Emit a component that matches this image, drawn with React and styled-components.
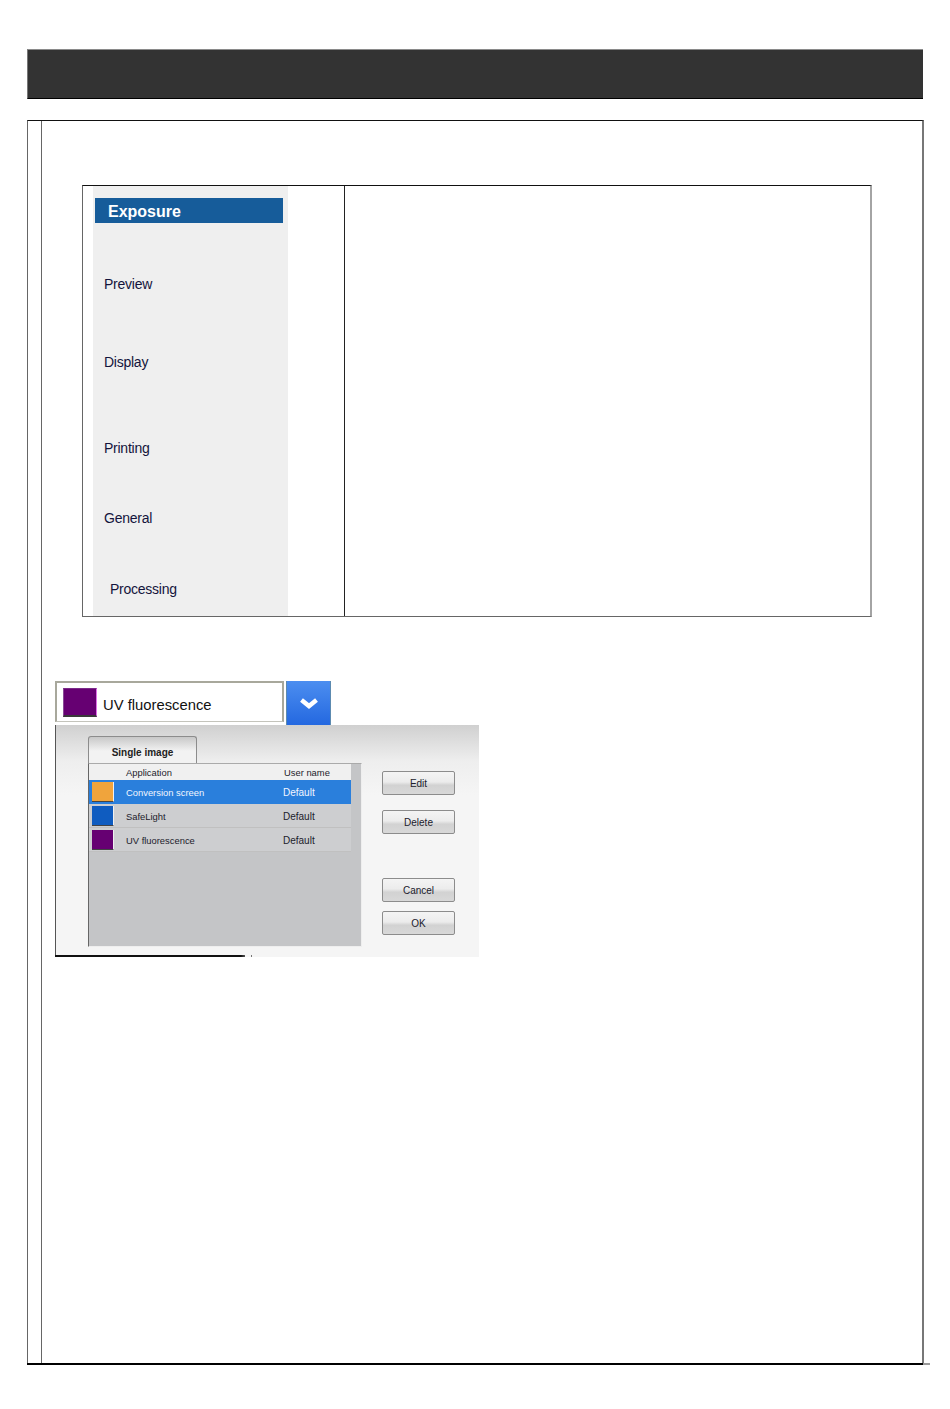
import React from "react";
import styled, { createGlobalStyle } from "styled-components";

const Global = createGlobalStyle`
  html, body { margin: 0; padding: 0; background: #fff; }
  body { font-family: "Liberation Sans", Arial, sans-serif; }
`;

const Page = styled.div`
  width: 950px;
  height: 1409px;
  padding: 49px 0 0 27px;
  box-sizing: border-box;
  overflow: hidden;
`;
const TitleBar = styled.div`
  width: 896px;
  height: 50px;
  box-sizing: border-box;
  background: #333333;
  border-top: 1px solid #8a8a8a;
  border-left: 1px solid #777;
  border-bottom: 1px solid #000;
`;
const Frame = styled.div`
  margin-top: 21px;
  width: 897px;
  height: 1243px;
  box-sizing: border-box;
  display: flex;
  border-top: 1px solid #111;
  border-left: 1px solid #666;
  border-right: 2px solid #777;
`;
const Gutter = styled.div`
  width: 13px;
  flex: none;
  border-right: 1px solid #666;
`;
const Content = styled.div`
  flex: 1;
  padding: 64px 0 0 13px;
`;
const Rule = styled.div`
  width: 903px;
  height: 2px;
  background: linear-gradient(to right, #000 896px, #999 896px);
`;
const InfoTable = styled.div`
  width: 790px;
  height: 432px;
  margin-left: 27px;
  box-sizing: border-box;
  display: flex;
  border-top: 1px solid #111;
  border-left: 1px solid #666;
  border-right: 2px solid #a4a4a4;
  border-bottom: 1px solid #666;
`;
const MenuCell = styled.div`
  width: 262px;
  flex: none;
  box-sizing: border-box;
  padding-left: 10px;
  border-right: 1px solid #222;
`;
const Menu = styled.div`
  width: 195px;
  height: 100%;
  background: #efefef;
  display: flex;
  flex-direction: column;
  padding-top: 12px;
  box-sizing: border-box;
`;
const ActiveItem = styled.div`
  width: 188px;
  height: 25px;
  margin-left: 2px;
  box-sizing: border-box;
  padding-left: 13px;
  background: #165c9a;
  color: #fff;
  font-weight: 700;
  font-size: 16px;
  line-height: 27px;
`;
const MenuItem = styled.div`
  height: 16px;
  line-height: 16px;
  font-size: 14px;
  letter-spacing: -0.25px;
  color: #14143c;
  margin-top: ${(p) => p.$top}px;
  margin-left: ${(p) => p.$left}px;
`;
const Picker = styled.div`
  margin-top: 64px;
  display: flex;
  align-items: flex-start;
  gap: 2px;
`;
const PickerField = styled.div`
  width: 229px;
  height: 41px;
  box-sizing: border-box;
  display: flex;
  align-items: center;
  gap: 6px;
  padding-left: 6px;
  border: 2px solid #a8a89c;
  border-bottom-width: 1px;
  border-bottom-color: #c4c4bc;
  font-size: 14.8px;
  color: #111;
`;
const PickerLabel = styled.span`
  padding-top: 5px;
  line-height: 18px;
`;
const PickerSwatch = styled.div`
  width: 34px;
  height: 29px;
  box-sizing: border-box;
  background: #660072;
  border-top: 1px solid #7a2a88;
  border-left: 1px solid #8a4a96;
  border-right: 1px solid #e070e8;
  border-bottom: 2px solid #3a3a3a;
`;
const PickerButton = styled.div`
  width: 45px;
  height: 44px;
  box-sizing: border-box;
  display: flex;
  align-items: center;
  justify-content: center;
  background: linear-gradient(#4c8ef0, #2468e0);
  border-right: 1px solid #5c8ab0;
  border-left: 1px solid #5c8ab0;
`;
const Dialog = styled.div`
  width: 424px;
  height: 232px;
  box-sizing: border-box;
  display: flex;
  padding: 11px 0 0 32px;
  gap: 20px;
  background: linear-gradient(#d0d0d0 0, #eeeeee 36px, #f5f5f5 70px);
  border-left: 1px solid #555;
`;
const ListColumn = styled.div`
  display: flex;
  flex-direction: column;
`;
const Tab = styled.div`
  width: 109px;
  height: 27px;
  box-sizing: border-box;
  padding-top: 9px;
  text-align: center;
  font-size: 10px;
  font-weight: 700;
  line-height: 13px;
  color: #222;
  border: 1px solid #8c8c8c;
  border-bottom: none;
  border-radius: 3px 3px 0 0;
  background: linear-gradient(#c8c8c8, #f2f2f2 14px);
`;
const ListPanel = styled.div`
  width: 274px;
  height: 184px;
  box-sizing: border-box;
  background: #c4c5c7;
  border-top: 1px solid #aaa;
  border-left: 1px solid #666;
  border-right: 1px solid #eee;
  border-bottom: 1px solid #eee;
`;
const Row = styled.div`
  width: 262px;
  display: flex;
  align-items: center;
  box-sizing: border-box;
  height: ${(p) => (p.$head ? 16 : 24)}px;
  background: ${(p) => (p.$head ? "#f0f0f0" : p.$selected ? "#2a7fdc" : "#cdced0")};
  color: ${(p) => (p.$selected ? "#f2f6ff" : "#1c1c2c")};
  border-bottom: ${(p) => (p.$head || p.$selected ? "none" : "1px solid #c0c0c0")};
  font-size: 9.4px;
`;
const RowSwatch = styled.div`
  width: 22px;
  height: 20px;
  margin-left: 3px;
  flex: none;
  box-sizing: border-box;
  background: ${(p) => p.$color};
  border-right: 1px solid #f0f0f0;
  border-bottom: 1px solid #444;
`;
const SwatchSpace = styled.div`
  width: 25px;
  flex: none;
`;
const NameCell = styled.div`
  width: 158px;
  margin-left: 12px;
  flex: none;
  padding-top: ${(p) => (p.$plain ? 1 : 0)}px;
`;
const OwnerCell = styled.div`
  flex: 1;
  padding-top: ${(p) => (p.$plain ? 1 : 0)}px;
  margin-left: ${(p) => (p.$value ? -1 : 0)}px;
  font-size: ${(p) => (p.$value ? 10 : 9.4)}px;
`;
const ButtonColumn = styled.div`
  display: flex;
  flex-direction: column;
  padding-top: 35px;
`;
const DialogButton = styled.div`
  width: 73px;
  height: 24px;
  box-sizing: border-box;
  margin-top: ${(p) => p.$top}px;
  display: flex;
  align-items: center;
  justify-content: center;
  font-size: 10px;
  color: #20202c;
  border: 1px solid #8c8c8c;
  border-radius: 2px;
  background: linear-gradient(#f4f4f4, #ececec 45%, #d2d2d2 60%, #d8d8d8);
`;
const DialogEdge = styled.div`
  width: 424px;
  height: 2px;
  margin-top: -2px;
  position: relative;
  background: linear-gradient(to right, #111 186px, #555 190px, transparent 190px, transparent 196px, #777 196px, #777 197px, transparent 197px);
`;

const rows = [
  { name: "Conversion screen", color: "#f0a43c", selected: true },
  { name: "SafeLight", color: "#0f5cc0" },
  { name: "UV fluorescence", color: "#660072" },
];

const items = [
  { label: "Preview", top: 53, left: 11 },
  { label: "Display", top: 62, left: 11 },
  { label: "Printing", top: 70, left: 11 },
  { label: "General", top: 54, left: 11 },
  { label: "Processing", top: 55, left: 17 },
];

export default function App() {
  return (
    <Page>
      <Global />
      <TitleBar />
      <Frame>
        <Gutter />
        <Content>
          <InfoTable>
            <MenuCell>
              <Menu>
                <ActiveItem>Exposure</ActiveItem>
                {items.map((it) => (
                  <MenuItem key={it.label} $top={it.top} $left={it.left}>
                    {it.label}
                  </MenuItem>
                ))}
              </Menu>
            </MenuCell>
          </InfoTable>
          <Picker>
            <PickerField>
              <PickerSwatch />
              <PickerLabel>UV fluorescence</PickerLabel>
            </PickerField>
            <PickerButton>
              <svg width="20" height="14" viewBox="0 0 20 14">
                <path d="M2.5 4 L10 10 L17.5 4" fill="none" stroke="#fff" strokeWidth="4.5" />
              </svg>
            </PickerButton>
          </Picker>
          <Dialog>
            <ListColumn>
              <Tab>Single image</Tab>
              <ListPanel>
                <Row $head>
                  <SwatchSpace />
                  <NameCell>Application</NameCell>
                  <OwnerCell $plain>User name</OwnerCell>
                </Row>
                {rows.map((r) => (
                  <Row key={r.name} $selected={r.selected}>
                    <RowSwatch $color={r.color} />
                    <NameCell $plain={!r.selected}>{r.name}</NameCell>
                    <OwnerCell $plain={!r.selected} $value>Default</OwnerCell>
                  </Row>
                ))}
              </ListPanel>
            </ListColumn>
            <ButtonColumn>
              <DialogButton $top={0}>Edit</DialogButton>
              <DialogButton $top={15}>Delete</DialogButton>
              <DialogButton $top={44}>Cancel</DialogButton>
              <DialogButton $top={9}>OK</DialogButton>
            </ButtonColumn>
          </Dialog>
          <DialogEdge />
        </Content>
      </Frame>
      <Rule />
    </Page>
  );
}
